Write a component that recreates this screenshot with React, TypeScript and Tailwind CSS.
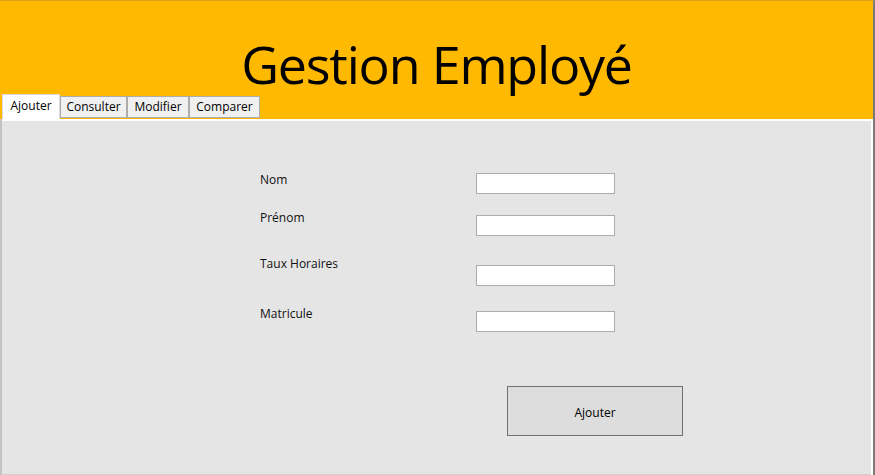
import { useState } from 'react'

const tabs = [
  { label: 'Ajouter', width: 'w-[58px]' },
  { label: 'Consulter', width: 'w-[67px]' },
  { label: 'Modifier', width: 'w-[62px]' },
  { label: 'Comparer', width: 'w-[71px]' },
]

const fields = [
  { label: 'Nom', rowClass: 'h-[38px]', inputClass: 'mt-[1px]' },
  { label: 'Prénom', rowClass: 'h-[46px]', inputClass: 'mt-[5px]' },
  { label: 'Taux Horaires', rowClass: 'h-[50px]', inputClass: 'mt-[9px]' },
  { label: 'Matricule', rowClass: 'h-[26px]', inputClass: 'mt-[5px]' },
]

export default function App() {
  const [active, setActive] = useState('Ajouter')

  return (
    <div className="w-[875px] h-[475px] flex flex-col bg-[#ffb900] border-t border-[#d9a520] border-r-2 border-r-[#7a7a7a] font-['Open_Sans',sans-serif] text-black overflow-hidden">
      <header className="h-[93px] flex items-start justify-center pt-[35px]">
        <h1 className="text-[52px] leading-[56px] tracking-[-1.2px] whitespace-nowrap">Gestion Employé</h1>
      </header>

      <div className="flex items-end h-[25px] pl-[2px]">
        {tabs.map((t) => {
          const selected = t.label === active
          return (
            <button
              key={t.label}
              onClick={() => setActive(t.label)}
              className={
                selected
                  ? `${t.width} h-[25px] bg-white border border-b-0 border-[#d9d9d9] text-[12px] leading-none pb-[2px] relative z-10`
                  : `${t.width} h-[22px] bg-[#f0f0f0] border border-[#acacac] text-[12px] leading-none mb-[1px]`
              }
            >
              {t.label}
            </button>
          )
        })}
      </div>

      <div className="flex-1 bg-white pt-[2px] pr-[2px] border-l-2 border-l-[#c4c4c4]">
        <div className="h-full bg-[#e5e5e5] border-b border-[#cfcfcf] pt-[51px] pl-[258px]">
          {fields.map((f) => (
            <div key={f.label} className={`flex items-start ${f.rowClass}`}>
              <label className="w-[216px] text-[12px] leading-[16px] text-[#111]">{f.label}</label>
              <input
                type="text"
                className={`w-[139px] h-[21px] bg-white border border-[#acacac] outline-none ${f.inputClass}`}
              />
            </div>
          ))}
          <button className="ml-[247px] mt-[54px] w-[176px] h-[50px] bg-[#dddddd] border border-[#707070] text-[12px] pt-[3px]">
            Ajouter
          </button>
        </div>
      </div>
    </div>
  )
}
